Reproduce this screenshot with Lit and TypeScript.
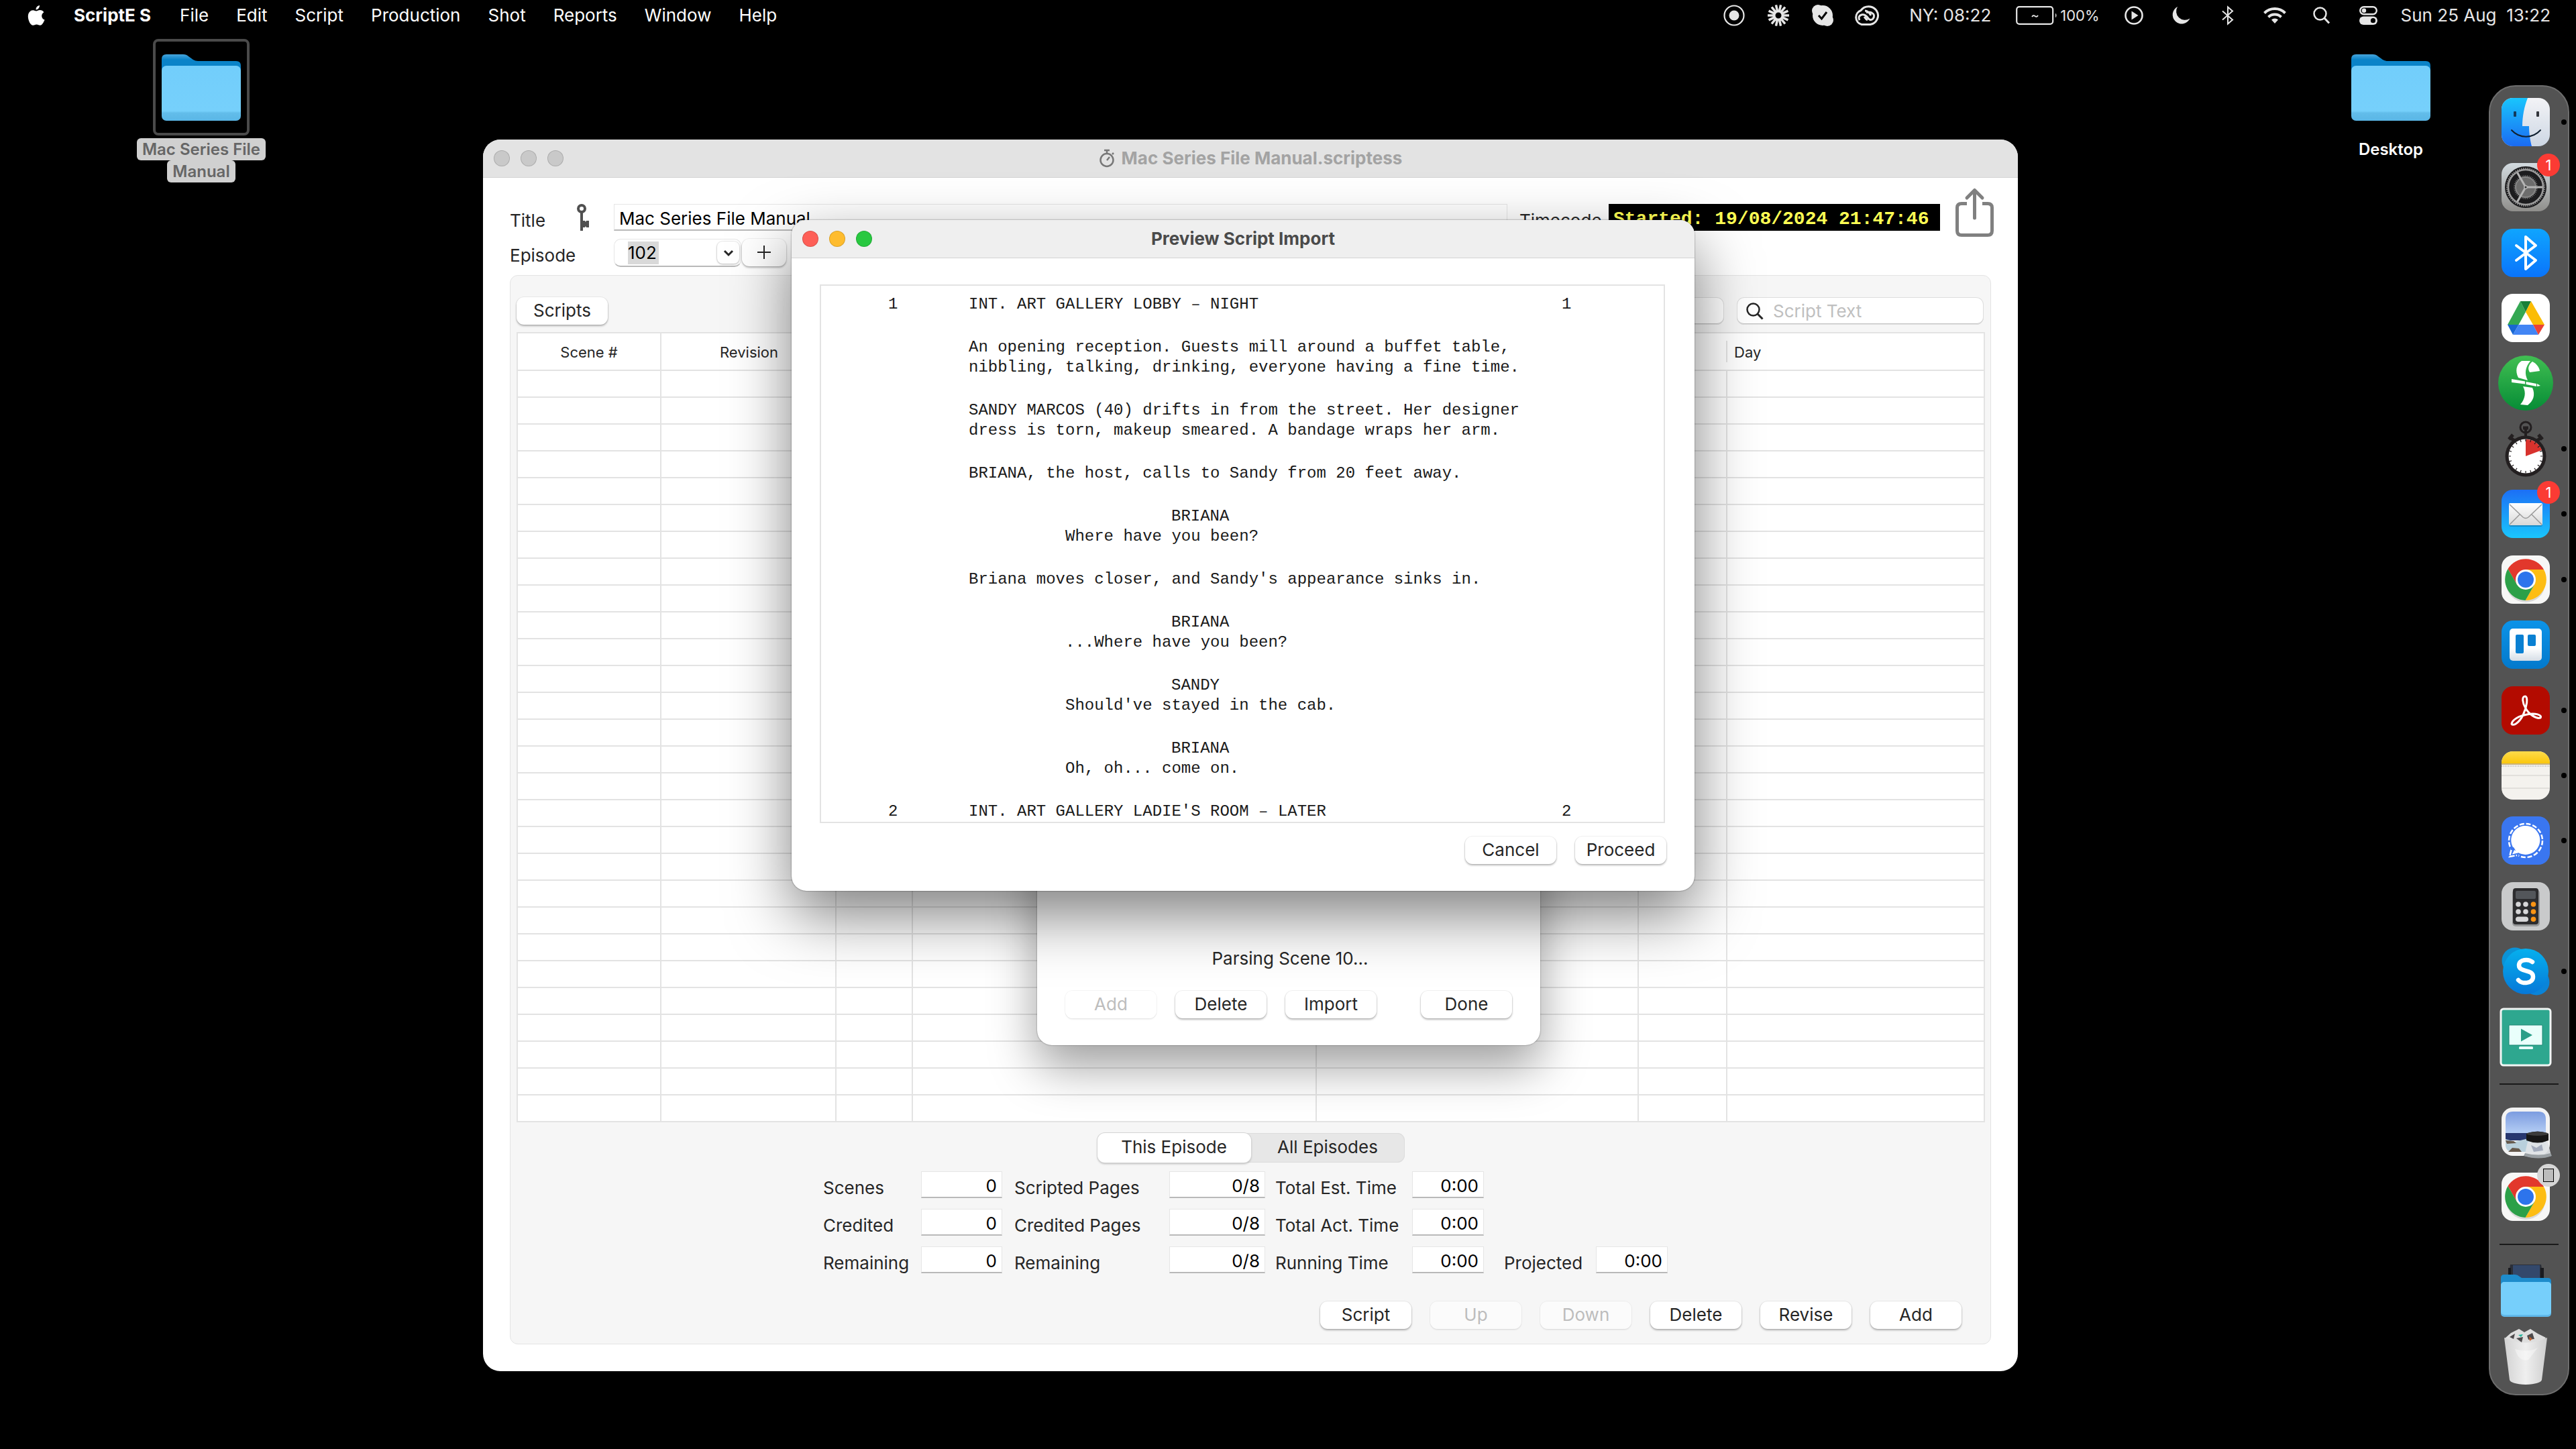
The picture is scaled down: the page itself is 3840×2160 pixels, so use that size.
import { LitElement, html, svg, css, nothing } from "lit";
import { customElement, property } from "lit/decorators.js";

const tile = (fill: string) => svg`<rect width="72" height="72" rx="17" fill=${fill} />`;

const chrome = svg`
  <rect width="72" height="72" rx="17" fill="#f7f7f6" />
  <ellipse cx="36" cy="42" rx="29" ry="28" fill="#000" opacity=".12" />
  <path d="M36 21H63A31 31 0 0 0 9.500 20.100L23 43.500 36 36z" fill="#e2382c" />
  <path d="M49 43.500L35.500 66.900A31 31 0 0 0 63 21H36v15z" fill="#fdbd14" />
  <path d="M23 43.500L9.500 20.100A31 31 0 0 0 35.500 66.900L49 43.500 36 36z" fill="#2ca048" />
  <circle cx="36" cy="36" r="15" fill="#fff" />
  <circle cx="36" cy="36" r="12" fill="#2d74ec" />`;

const spokes = (n: number, r1: number, r2: number) =>
  Array.from({ length: n }, (_, i) => {
    const a = (i * 2 * Math.PI) / n;
    const p = (r: number) => `${(Math.cos(a) * r).toFixed(2)} ${(Math.sin(a) * r).toFixed(2)}`;
    return `M${p(r1)}L${p(r2)}`;
  }).join("");

const dockArt: Record<string, unknown> = {
  finder: svg`
    <defs>
      <linearGradient id="a" x2="0" y2="1"><stop stop-color="#19c5fd" /><stop offset="1" stop-color="#1b6bf2" /></linearGradient>
      <linearGradient id="b" x2="0" y2="1"><stop stop-color="#f3f3f6" /><stop offset="1" stop-color="#cdd7e4" /></linearGradient>
      <clipPath id="c"><rect width="72" height="72" rx="17" /></clipPath>
    </defs>
    ${tile("url(#b)")}
    <path clip-path="url(#c)" d="M0 0H39C34 12 31 28 31 42H41C41 54 43 64 45 72H0z" fill="url(#a)" />
    <rect x="18" y="20" width="4" height="8" rx="1" fill="#123a5c" />
    <rect x="52" y="20" width="4" height="8" rx="1" fill="#33363c" />
    <path d="M15 48C27 61 46 61 58 48" fill="none" stroke="#10202f" stroke-width="2" stroke-linecap="round" />`,
  settings: svg`
    <defs><linearGradient id="a" x2="0" y2="1"><stop stop-color="#d3dbe0" /><stop offset="1" stop-color="#8f8e8b" /></linearGradient></defs>
    ${tile("url(#a)")}
    <circle cx="36" cy="36" r="31" fill="#1c1c1e" />
    <circle cx="36" cy="36" r="26" fill="none" stroke="#9b9b9b" stroke-width="2.500" />
    <path transform="translate(36 36)" d=${spokes(56, 25, 29)} stroke="#9b9b9b" stroke-width="1.300" />
    <circle cx="36" cy="36" r="15" fill="#6d6d6d" stroke="#888" stroke-width="2" />
    <path transform="translate(36 36)" d=${spokes(40, 15, 18)} stroke="#808080" stroke-width="1" />
    <path d="M36 36H61M36 36L23.500 14.300M36 36L23.500 57.700" stroke="#b5b5b5" stroke-width="3" />
    <circle cx="36" cy="36" r="3" fill="#b5b5b5" /><circle cx="36" cy="36" r="1.500" fill="#333" />`,
  bluetooth: svg`
    <defs><linearGradient id="a" x2="0" y2="1"><stop stop-color="#0fa5ff" /><stop offset="1" stop-color="#0a74fb" /></linearGradient></defs>
    ${tile("url(#a)")}
    <path d="M22 25L51 47 36 60V12L51 25 22 47" fill="none" stroke="#fff" stroke-width="4" stroke-linejoin="round" stroke-linecap="round" />`,
  drive: svg`
    ${tile("#fff")}
    <path d="M28 11L9 46H25.500L36 27z" fill="#34a853" /><path d="M28 11H44L36 27z" fill="#188038" />
    <path d="M44 11L64 46H47L36 27z" fill="#fbbc04" /><path d="M9 46H25.500L17 61z" fill="#1967d2" />
    <path d="M25.500 46H47L55 61H17z" fill="#4285f4" /><path d="M47 46H64L55 61z" fill="#ea4335" />`,
  draft: svg`
    <defs><linearGradient id="a" x2="0" y2="1"><stop stop-color="#41bf52" /><stop offset="1" stop-color="#068c36" /></linearGradient></defs>
    <circle cx="36" cy="36" r="41" fill="url(#a)" />
    <g fill="#fff">
      <path d="M30 3H43C35 13 34 22 39 32L25 28C20 18 22 8 30 3z" />
      <path d="M46 4C52 7 56 12 57 18L42 20C38 14 41 8 46 4z" />
      <path d="M15 30L35 33.500V37.500L15 35zM36.500 34L52 37V41L36.500 38zM53 37L58 40 53 41z" />
      <path d="M32 41L46 43C51 54 47 63 39 69L28 68C35 60 37 50 32 41z" />
    </g>`,
  stopwatch: svg`
    <g fill="none" stroke="#231f20"><circle cx="36" cy="4" r="8" stroke-width="3" />
    <path d="M36 5V20" stroke-width="4" /><path d="M32 5H40" stroke-width="5" />
    <path d="M12 19L21 25M60 19L51 25" stroke-width="5" /><path d="M11 22L17 15M61 22L55 15" stroke-width="5" /></g>
    <circle cx="36" cy="47" r="30.500" fill="#231f20" /><circle cx="36" cy="47" r="25.500" fill="#fff" />
    <path d="M36 47V22A25 25 0 0 1 60 38z" fill="#d8322d" />
    <path transform="translate(36 47)" d=${spokes(20, 22, 25.5)} stroke="#231f20" stroke-width="1.200" />`,
  mail: svg`
    <defs>
      <linearGradient id="a" x2="0" y2="1"><stop stop-color="#1c6ff5" /><stop offset="1" stop-color="#1ac6fd" /></linearGradient>
      <linearGradient id="b" x2="0" y2="1"><stop stop-color="#fff" /><stop offset="1" stop-color="#d8d8d8" /></linearGradient>
    </defs>
    ${tile("url(#a)")}
    <rect x="11" y="22" width="50" height="33" rx="3" opacity=".2" />
    <rect x="11" y="20" width="50" height="33" rx="2" fill="url(#b)" />
    <path d="M12 22L32 41Q36 44 40 41L60 22M12 52L27 37M60 52L45 37" fill="none" stroke="#9a9a9a" stroke-width="1.500" />`,
  chrome,
  trello: svg`
    <defs><linearGradient id="a" x2="0" y2="1"><stop stop-color="#0c93e8" /><stop offset="1" stop-color="#0379cc" /></linearGradient>
    <linearGradient id="b" x2="0" y2="1"><stop offset=".6" stop-color="#fff" /><stop offset="1" stop-color="#d5dde6" /></linearGradient></defs>
    ${tile("url(#a)")}
    <rect x="12" y="12" width="48" height="48" rx="5" fill="url(#b)" />
    <rect x="21" y="21" width="12" height="28" rx="2" fill="#0a80d2" /><rect x="39" y="21" width="12" height="17" rx="2" fill="#0a80d2" />`,
  acrobat: svg`
    ${tile("#b30b00")}
    <path d="M35 15C30 15 31 25 36 33C41 42 52 49 58 47C61 43 50 39 38 42C26 44 16 50 15 56C17 60 26 55 32 43C38 31 40 15 35 15z" fill="none" stroke="#fff" stroke-width="3" />`,
  notes: svg`
    <defs><clipPath id="c"><rect width="72" height="72" rx="17" /></clipPath>
    <linearGradient id="a" x2="0" y2="1"><stop stop-color="#fddb4b" /><stop offset="1" stop-color="#fbc70d" /></linearGradient></defs>
    <g clip-path="url(#c)"><rect width="72" height="72" fill="#f4f2ee" /><rect width="72" height="18" fill="url(#a)" />
    <path d="M0 19H72" stroke="#bd9d52" stroke-width="1.500" /><path d="M0 22H72" stroke="#bbb" stroke-width="2" stroke-dasharray="1 1.500" />
    <path d="M0 36H72M0 55H72" stroke="#cfcdc9" /></g>`,
  signal: svg`
    ${tile("#3a76f0")}
    <path d="M20 50L16 56 25 54A21.500 21.500 0 1 0 20 50z" fill="#fff" />
    <circle cx="36" cy="36" r="25" fill="none" stroke="#fff" stroke-width="2.500" stroke-dasharray="7 2.800" />
    <path d="M12 46L20 62 26 59 18 46z" fill="#3a76f0" /><path d="M19 50L16 56.500 26 54z" fill="#fff" />
    <path d="M14.500 50L12 60 23 58" fill="none" stroke="#fff" stroke-width="2.500" stroke-dasharray="8 2" />`,
  calculator: svg`
    ${tile("#c9cacb")}
    <rect x="16" y="11" width="41" height="55" rx="5" opacity=".25" /><rect x="17" y="9" width="38" height="54" rx="4" fill="#2c2c2e" />
    <rect x="21" y="13" width="30" height="12" rx="2" fill="#53565a" />
    <g fill="#d6d6d8"><circle cx="25" cy="33" r="3.800" /><circle cx="36" cy="33" r="3.800" /><circle cx="25" cy="44" r="3.800" /><circle cx="36" cy="44" r="3.800" /><rect x="21" y="51.500" width="19" height="7.600" rx="3.800" /></g>
    <g fill="#fb9414"><circle cx="47.500" cy="33" r="3.800" /><circle cx="47.500" cy="44" r="3.800" /><circle cx="47.500" cy="55.300" r="3.800" /></g>`,
  skype: svg`
    <defs><linearGradient id="a" x2="0" y2="1"><stop stop-color="#06b0ee" /><stop offset="1" stop-color="#0678d8" /></linearGradient></defs>
    <circle cx="20" cy="20" r="19.500" fill="#0b92d6" /><circle cx="52" cy="52" r="19.500" fill="#0a84d8" />
    <circle cx="36" cy="36" r="34" fill="url(#a)" />
    <path d="M46 22C40 17 26 18 26 27C26 38 47 32 47 44C47 55 30 55 25 49" fill="none" stroke="#fff" stroke-width="6.500" stroke-linecap="round" />`,
  screen: svg`
    <rect x="-1" y="-6" width="74" height="84" rx="4" fill="#2ea78f" stroke="#f1f5f4" stroke-width="3" />
    <rect x="11" y="18" width="50" height="30" rx="1" fill="#e9fffb" stroke="#1d8572" />
    <path d="M29 23.500L46 33 29 42.500z" fill="#2b9f88" /><rect x="26" y="50" width="21" height="4" rx="1.500" fill="#e9fffb" />`,
  preview: svg`
    <defs><linearGradient id="a" x2="0" y2="1"><stop stop-color="#7c9ce0" /><stop offset="1" stop-color="#b4cdf4" /></linearGradient></defs>
    ${tile("#f3f3f3")}
    <path d="M6 17Q6 6 17 6H55Q66 6 66 17V38H6z" fill="url(#a)" />
    <rect x="6" y="38" width="60" height="11" fill="#27376f" /><path d="M6 47L20 51 40 46 66 49V55Q66 66 55 66H17Q6 66 6 55z" fill="#b9d0dc" />
    <path d="M6 49L18 50 22 53 8 54zM10 66L16 60 26 61 30 66z" fill="#66594c" />
    <path d="M39 51H69L74 72Q56 78 34 72z" fill="#dfe3e6" opacity=".92" /><path d="M33 72Q56 79 75 72L73 68Q56 73 35 68z" fill="#9aa0a4" />
    <path d="M44 56L52 60 60 55 62 64 48 66z" fill="#7d87a0" opacity=".6" />
    <path d="M37 39Q54 32 70 39V49Q54 56 37 49z" fill="#161616" /><ellipse cx="53.500" cy="39" rx="16" ry="3" fill="#3b3b3b" />`,
  folder: svg`
    <path d="M10 18L13 -5H59L63 18z" fill="#2b2f38" /><path d="M17 16V-4H57V16z" fill="#33486b" /><path d="M10 0H14V16H10zM58 0H63V16H58z" fill="#1a1b1f" />
    <path d="M-1 15Q-1 10 4 10H20Q24 10 27 13L30 15H69Q74 15 74 20V32H-1z" fill="#1e8ccc" />
    <rect x="-1" y="21" width="75" height="52" rx="5" fill="#5fb8ea" /><rect x="-1" y="21" width="75" height="49" rx="5" fill="#76cffb" />`,
  trash: svg`
    <defs><linearGradient id="a"><stop stop-color="#d2d2d2" /><stop offset=".5" stop-color="#efefef" /><stop offset="1" stop-color="#cfcfcf" /></linearGradient></defs>
    <path d="M5 8L14 0 26 -6 34 -1 43 -6 54 1 66 7 60 16H12z" fill="#dedede" />
    <path d="M12 6L20 1 18 9zM38 4L46 0 49 9 40 10zM22 8L32 6 30 14z" fill="#4d4a4c" /><path d="M25 3L32 2 29 6z" fill="#23b79c" /><path d="M41 5L46 9 42 12z" fill="#c0612e" />
    <path d="M4 7Q36 22 68 7L60 70Q58 76 36 77Q14 76 12 70z" fill="url(#a)" /><path d="M20 24Q40 30 54 22L40 40Q26 44 20 24z" fill="#fff" opacity=".4" />`,
};

const menuIcons: Record<string, unknown> = {
  apple: svg`<path fill="#fff" d="M18 1c.2 3.500-2.600 6.700-5.400 6.500C12.200 4.200 15.300 1.200 18 1zM13 9.500c1.300 0 3-1.500 5.600-1.500 2.300 0 4.500 1.200 5.800 3.200-4.700 2.800-4 9.500 1.100 11.300-1 3-3.800 8.300-6.600 8.300-2 0-2.900-1.300-5.400-1.300s-3.400 1.300-5.300 1.300C4.500 30.800.8 23.500.8 17.500c0-5.900 3.700-9.300 7.300-9.300 2.200 0 3.800 1.300 4.900 1.300z"/>`,
  record: svg`<circle cx="16" cy="16" r="14.500" fill="none" stroke="#e6e6e6" stroke-width="2.200"/><circle cx="16" cy="16" r="7.500" fill="#e6e6e6"/>`,
  burst: svg`<g transform="translate(17 17)"><path d=${spokes(14, 6.5, 16)} stroke="#e6e6e6" stroke-width="3.500"/><circle r="6" fill="none" stroke="#e6e6e6" stroke-width="3"/></g>`,
  skype: svg`<g fill="#e6e6e6"><circle cx="9" cy="9" r="9"/><circle cx="23" cy="23" r="9"/><circle cx="16" cy="16" r="15"/></g><path d="M10 16l4.500 5L22 11" fill="none" stroke="#000" stroke-width="3"/>`,
  cloud: svg`<g fill="none" stroke="#e6e6e6" stroke-width="3"><path d="M12 28.500A11 11 0 0 1 11 7.500A14 13.500 0 1 1 25 28.500z"/><path d="M9 22q-3-6 3-8q5-1 9 4q4 6 8 2q4-6-2-9q-5-2-8 0M21 22q-2-1-5-5M17 8q5 0 9 7"/></g>`,
  battery: svg`<rect x="1.200" y="1.200" width="54" height="25.600" rx="4" fill="none" stroke="#e6e6e6" stroke-width="2.200"/><path d="M59 10.500q3 3.500 0 7z" fill="#e6e6e6"/><path d="M24 16q2-3 4.500-1t4.500-1" fill="none" stroke="#e6e6e6" stroke-width="1.800"/>`,
  play: svg`<circle cx="14" cy="14" r="12.500" fill="none" stroke="#e6e6e6" stroke-width="2.600"/><path d="M10.500 7.500L20.500 14l-10 6.500z" fill="#e6e6e6"/>`,
  moon: svg`<path d="M9 1A13.500 13.500 0 1 0 27.500 18.500A13 13 0 0 1 9 1z" fill="#e6e6e6"/>`,
  bluetooth: svg`<path d="M1 7.500L16 20.500 9 26.500V1.500L16 7.500 1 20.500" fill="none" stroke="#e6e6e6" stroke-width="2"/>`,
  wifi: svg`<g fill="none" stroke="#e6e6e6" stroke-width="4"><path d="M1.500 9.500a22 22 0 0 1 31 0"/><path d="M7.500 15.500a13.500 13.500 0 0 1 19 0"/></g><path d="M12 19.500a7 7 0 0 1 10 0L17 25z" fill="#e6e6e6"/>`,
  search: svg`<circle cx="10.500" cy="10.500" r="9" fill="none" stroke="#e6e6e6" stroke-width="2.500"/><path d="M17 17l7 7.500" stroke="#e6e6e6" stroke-width="3"/>`,
  control: svg`<rect x="1.200" y="1.200" width="24.600" height="11" rx="5.500" fill="none" stroke="#e6e6e6" stroke-width="2.400"/><circle cx="7" cy="6.700" r="3.200" fill="#e6e6e6"/><rect y="15.500" width="27" height="12.500" rx="6.200" fill="#e6e6e6"/><circle cx="20.500" cy="21.700" r="3.600" fill="#000"/>`,
};

@customElement("desktop-folder")
class DesktopFolder extends LitElement {
  @property() name = "";
  @property({ type: Boolean }) selected = false;
  static styles = css`
    :host { display: block; width: 200px; text-align: center; }
    .frame { display: grid; place-items: center; box-sizing: border-box; width: 144px; height: 144px; margin: 0 auto 4px; padding-top: 2px; border: 4px solid transparent; border-radius: 8px; }
    .on { border-color: #4a4a4a; }
    .name { font: 600 24px/33px Inter, sans-serif; color: #fff; }
    .on + .name span { background: #d0d0d0; color: #666; border-radius: 6px; padding: 2px 8px; -webkit-box-decoration-break: clone; box-decoration-break: clone; }
  `;
  render() {
    return html`
      <div class="frame ${this.selected ? "on" : ""}">
        <svg width="118" height="100" viewBox="0 0 118 100">
          <defs>
            <linearGradient id="back" x2="0" y2="1"><stop stop-color="#48a6dc" /><stop offset=".2" stop-color="#0a83c8" /></linearGradient>
            <linearGradient id="front" x2="0" y2="1"><stop stop-color="#72cefb" /><stop offset=".82" stop-color="#76d0fb" /><stop offset=".86" stop-color="#62bdea" /><stop offset="1" stop-color="#5ab6e6" /></linearGradient>
          </defs>
          <path d="M0 7Q0 0 7 0H32Q37 0 40 3L47 8Q50 10 54 10H111Q118 10 118 17V40H0z" fill="url(#back)" />
          <rect y="17" width="118" height="82" rx="7" fill="url(#front)" />
        </svg>
      </div>
      <div class="name"><span>${this.name}</span></div>`;
  }
}

@customElement("dock-item")
class DockItem extends LitElement {
  @property() icon = "";
  @property() label = "";
  @property() badge = "";
  @property({ type: Boolean }) running = false;
  static styles = css`
    :host { display: flex; align-items: center; position: relative; }
    button { all: unset; display: block; margin-left: 17px; height: 72px; }
    svg { display: block; overflow: visible; }
    .dot { position: absolute; right: 2px; width: 8px; height: 8px; border-radius: 50%; background: #000; }
    .badge { position: absolute; left: 70px; top: -1px; width: 34px; height: 34px; border-radius: 50%; background: #fb3b34; color: #fff; font: 22px/34px Inter, sans-serif; text-align: center; }
    .device { background: #d6d6d6; }
    .device::after { content: ""; display: block; width: 14px; height: 18px; margin: 7px 9px; border: 1px solid #000; background: #bcbcbc; }
  `;
  render() {
    return html`
      <button aria-label=${this.label}>
        <svg width="72" height="72" viewBox="0 0 72 72">${dockArt[this.icon]}</svg>
      </button>
      ${this.badge === "device" ? html`<span class="badge device"></span>` : this.badge ? html`<span class="badge">${this.badge}</span>` : nothing}
      ${this.running ? html`<span class="dot"></span>` : nothing}`;
  }
}

type Line = [kind: string, text: string];
const scriptBlocks: { scene?: string; lines: Line[] }[] = [
  { scene: "1", lines: [["action", "INT. ART GALLERY LOBBY – NIGHT"]] },
  { lines: [["action", "An opening reception. Guests mill around a buffet table,"], ["action", "nibbling, talking, drinking, everyone having a fine time."]] },
  { lines: [["action", "SANDY MARCOS (40) drifts in from the street. Her designer"], ["action", "dress is torn, makeup smeared. A bandage wraps her arm."]] },
  { lines: [["action", "BRIANA, the host, calls to Sandy from 20 feet away."]] },
  { lines: [["character", "BRIANA"], ["speech", "Where have you been?"]] },
  { lines: [["action", "Briana moves closer, and Sandy's appearance sinks in."]] },
  { lines: [["character", "BRIANA"], ["speech", "...Where have you been?"]] },
  { lines: [["character", "SANDY"], ["speech", "Should've stayed in the cab."]] },
  { lines: [["character", "BRIANA"], ["speech", "Oh, oh... come on."]] },
  { scene: "2", lines: [["action", "INT. ART GALLERY LADIE'S ROOM – LATER"]] },
];

const stats: [string, string][][] = [
  [["Scenes", "0"], ["Scripted Pages", "0/8"], ["Total Est. Time", "0:00"]],
  [["Credited", "0"], ["Credited Pages", "0/8"], ["Total Act. Time", "0:00"]],
  [["Remaining", "0"], ["Remaining", "0/8"], ["Running Time", "0:00"], ["Projected", "0:00"]],
];

const dock: { icon: string; label: string; badge?: string; running?: boolean }[][] = [
  [
    { icon: "finder", label: "Finder", running: true },
    { icon: "settings", label: "System Settings", badge: "1" },
    { icon: "bluetooth", label: "Bluetooth" },
    { icon: "drive", label: "Google Drive" },
    { icon: "draft", label: "Final Draft" },
    { icon: "stopwatch", label: "ScriptE", running: true },
    { icon: "mail", label: "Mail", badge: "1", running: true },
    { icon: "chrome", label: "Chrome", running: true },
    { icon: "trello", label: "Trello" },
    { icon: "acrobat", label: "Acrobat", running: true },
    { icon: "notes", label: "Notes", running: true },
    { icon: "signal", label: "Signal", running: true },
    { icon: "calculator", label: "Calculator" },
    { icon: "skype", label: "Skype", running: true },
    { icon: "screen", label: "Video player" },
  ],
  [
    { icon: "preview", label: "Preview" },
    { icon: "chrome", label: "Chrome on another device", badge: "device" },
  ],
  [
    { icon: "folder", label: "Downloads" },
    { icon: "trash", label: "Bin" },
  ],
];

@customElement("app-root")
class AppRoot extends LitElement {
  static styles = css`
    :host { display: block; font: 26px/32px Inter, sans-serif; color: #262626; }
    * { box-sizing: border-box; }
    button, input { font: inherit; color: inherit; margin: 0; }
    .desktop { position: relative; min-height: 100vh; background: #000; overflow: hidden; }
    .glyph { display: block; flex: none; overflow: visible; }

    .menubar { display: flex; align-items: center; height: 48px; padding: 0 38px 2px 41px; color: #fff; }
    .menubar button { all: unset; }
    .menus { display: flex; align-items: center; gap: 41px; }
    .menus .app { font-weight: 700; padding: 0 2px; }
    .status { display: flex; align-items: center; margin-left: auto; color: #e6e6e6; }
    .slot { display: grid; place-items: center; width: 70px; }
    .slot.wide { width: 66px; }
    .ny { margin: 0 37px 0 30px; }
    .power { display: flex; align-items: center; gap: 4px; margin-right: 16px; font-size: 22px; }
    .clock { margin-left: 13px; white-space: pre; }

    .left-folder, .right-folder { position: absolute; top: 58px; }
    .left-folder { left: 200px; }
    .right-folder { right: 176px; }

    .window { position: absolute; background: #fff; border-radius: 26px; }
    .titlebar { display: grid; grid-template-columns: 200px 1fr 200px; align-items: center; height: 57px; border-bottom: 1px solid #d2d2d2; border-radius: 26px 26px 0 0; }
    .titlebar h1 { display: flex; justify-content: center; align-items: center; gap: 10px; margin: 0; font-size: 26px; font-weight: 700; }
    .lights { display: flex; gap: 16px; padding-left: 16px; }
    .lights button { all: unset; width: 22px; height: 22px; border: 1px solid rgba(0, 0, 0, .14); border-radius: 50%; background: #c9c9c9; }
    .lights .close { background: #fe5f57; }
    .lights .min { background: #febc2e; }
    .lights .max { background: #28c840; }

    .btn { display: grid; place-items: center; width: 136px; height: 41px; padding: 0 0 2px; border: 0; border-radius: 11px; background: #fff; box-shadow: 0 0 0 1px rgba(0, 0, 0, .05), 0 2px 3px rgba(0, 0, 0, .28); }
    .btn:disabled { color: #bdbdbd; background: rgba(255, 255, 255, .5); box-shadow: 0 0 0 1px rgba(0, 0, 0, .04), 0 2px 2px rgba(0, 0, 0, .06); }
    .field { height: 40px; border: 1px solid #e6e6e6; border-bottom: 2px solid #b9b9b9; background: #fff; color: #000; padding: 4px 7px 0; min-width: 0; border-radius: 0; outline: 0; }

    .main { left: 720px; right: 832px; top: 208px; }
    .main .titlebar { background: #e3e3e3; color: #a3a3a3; }
    .top { display: flex; align-items: flex-start; gap: 23px; padding: 16px 36px 0 40px; }
    .fields { flex: 1; display: flex; flex-direction: column; gap: 11px; padding-top: 23px; }
    .line { display: flex; }
    .line label { padding-top: 9px; }
    .leadbox { display: flex; justify-content: space-between; width: 155px; flex: none; }
    .key { padding: 0; border: 0; background: none; width: 55px; height: 40px; text-align: left; }
    .title { flex: 1; }
    .tc { width: 133px; margin-left: 18px; flex: none; }
    .timecode { width: 494px; flex: none; background: #000; color: #ffff54; font: 700 28px/46px "Liberation Mono", monospace; height: 40px; padding-left: 7px; white-space: pre; overflow: hidden; }
    .combo { display: flex; align-items: center; width: 190px; height: 42px; padding: 0 2px 0 20px; border: 1px solid #e6e6e6; border-bottom: 2px solid #b9b9b9; border-radius: 10px; }
    .combo input { width: 46px; height: 34px; padding: 0; border: 0; background: #d9d9d9; color: #000; }
    .combo button { display: grid; place-items: center; width: 33px; height: 33px; margin-left: auto; padding: 0; border: 0; border-radius: 8px; background: #fff; box-shadow: 0 0 0 1px rgba(0, 0, 0, .06), 0 1px 3px rgba(0, 0, 0, .25); }
    .line .add { width: 66px; margin-left: 1px; }
    .share { all: unset; }

    .panel { margin: 12px 40px 40px; padding: 32px 8px 22px 9px; border: 1px solid #e4e4e4; border-radius: 12px; background: #f6f6f6; }
    .tools { display: flex; justify-content: space-between; align-items: center; margin-bottom: 11px; padding-right: 2px; }
    .searches { display: flex; gap: 19px; }
    .search { display: flex; align-items: center; gap: 14px; width: 368px; height: 41px; padding: 0 14px; border-radius: 11px; background: #fff; box-shadow: inset 0 0 0 1px #dedede, inset 0 -2px 0 #c4c4c4; }
    .search input { flex: 1; min-width: 0; padding: 0; border: 0; background: none; outline: 0; }
    .search input::placeholder { color: #bfbfbf; opacity: 1; }
    table { width: 100%; table-layout: fixed; border-spacing: 0; border: 2px solid #e3e3e3; border-bottom: 0; background: #fff; }
    th { height: 56px; padding: 2px 10px 0; border-bottom: 2px solid #e3e3e3; font-size: 22px; font-weight: 400; line-height: 28px; text-align: center; }
    th:first-child { border-right: 2px solid #e3e3e3; }
    th:nth-child(6) { background: linear-gradient(#e3e3e3, #e3e3e3) right center / 2px 32px no-repeat; }
    th:last-child { text-align: left; }
    td { height: 40px; padding: 0; border-bottom: 2px solid #e3e3e3; border-right: 2px solid #e3e3e3; }
    td:last-child { border-right: 0; }
    .c1 { width: 214px; } .c2 { width: 261px; } .c3 { width: 114px; } .c5 { width: 480px; } .c6 { width: 132px; } .c7 { width: 382px; }

    .segments { display: flex; width: 458px; height: 44px; margin: 16px auto 13px; border-radius: 11px; background: #e7e7e7; box-shadow: inset 0 0 0 1px #dcdcdc; }
    .segments button { flex: 1; border: 0; padding: 0 0 3px; background: none; border-radius: 11px; }
    .segments .on { background: #fff; box-shadow: 0 0 0 1px #d4d4d4, 0 2px 3px rgba(0, 0, 0, .25); }
    .stats { display: grid; grid-template-columns: 146px 121px 249px 143px 219px 107px 167px 107px; gap: 16px 0; justify-content: center; padding-right: 16px; }
    .stats label { padding-top: 9px; line-height: 31px; }
    .stats label:nth-of-type(3n + 2) { padding-left: 18px; }
    .stats label:nth-of-type(3n) { padding-left: 15px; }
    .stats label:nth-of-type(10) { padding-left: 30px; }
    .stats label:nth-of-type(3n + 1) { grid-column-start: 1; }
    .stats label:nth-of-type(10) { grid-column-start: 7; }
    .stats .field { text-align: right; }
    .actions { display: flex; justify-content: flex-end; gap: 28px; margin-top: 42px; padding-right: 35px; }

    .sheet { left: 1546px; right: 1544px; top: 900px; border-radius: 22px; padding: 513px 42px 40px; box-shadow: 0 0 2px rgba(0, 0, 0, .5), 0 32px 70px rgba(0, 0, 0, .38); }
    .sheet p { margin: 0 0 32px; text-align: center; padding-left: 4px; }
    .row { display: flex; gap: 28px; }
    .row .done { margin-left: auto; }

    .preview { left: 1180px; right: 1314px; top: 328px; border-radius: 22px; box-shadow: 0 0 2px rgba(0, 0, 0, .6), 0 36px 90px rgba(0, 0, 0, .5); }
    .preview .titlebar { background: #efefef; color: #4a4a4a; border-radius: 22px 22px 0 0; }
    .script { margin: 39px 44px 20px 42px; padding: 13px 0 0; height: 803px; border: 2px solid #e3e3e3; overflow: hidden; font: 24px/30px "Liberation Mono", monospace; color: #1a1a1a; }
    .block { display: grid; grid-template-columns: 120px 884px auto; padding-left: 100px; margin-bottom: 34px; }
    .block p { margin: 0; white-space: pre; }
    .block .speech { padding-left: 144px; }
    .block .character { padding-left: 302px; }
    .confirm { display: flex; justify-content: flex-end; gap: 28px; padding: 0 42px 40px 0; }

    .dock { position: absolute; right: 10px; top: 127px; bottom: 80px; width: 120px; display: flex; flex-direction: column; padding: 4px 0 6px; border: 2px solid #6d6d6d; border-radius: 40px; background: #535353; }
    .dock dock-item { flex: 1 1 0; min-height: 0; }
    .dock hr { flex: none; width: 88px; height: 2px; margin: 21px 0 21px 14px; border: 0; background: #1a1a1a; }
  `;

  private lights(active: boolean) {
    const names = ["close", "min", "max"];
    return html`<div class="lights">${names.map((n) => html`<button class=${active ? n : ""} aria-label=${n}></button>`)}</div>`;
  }

  private renderMenubar() {
    return html`
      <header class="menubar">
        <nav class="menus">
          <button aria-label="Apple menu"><svg width="26" height="32" class="glyph">${menuIcons.apple}</svg></button>
          <button class="app">ScriptE S</button>
          ${["File", "Edit", "Script", "Production", "Shot", "Reports", "Window", "Help"].map((m) => html`<button>${m}</button>`)}
        </nav>
        <div class="status">
          ${[["record", 32, 32], ["burst", 34, 34], ["skype", 32, 32], ["cloud", 40, 30]].map(
            ([n, w, h]) => html`<span class="slot wide"><svg class="glyph" width=${w} height=${h}>${menuIcons[n]}</svg></span>`)}
          <span class="ny">NY: 08:22</span>
          <span class="power"><svg class="glyph" width="62" height="28">${menuIcons.battery}</svg>100%</span>
          ${[["play", 28, 28], ["moon", 28, 28], ["bluetooth", 18, 28], ["wifi", 34, 26], ["search", 25, 26], ["control", 27, 28]].map(
            ([n, w, h]) => html`<span class="slot"><svg class="glyph" width=${w} height=${h}>${menuIcons[n]}</svg></span>`)}
          <span class="clock">Sun 25 Aug  13:22</span>
        </div>
      </header>`;
  }

  private renderMain() {
    return html`
      <section class="window main">
        <div class="titlebar">
          ${this.lights(false)}
          <h1>
            <svg width="24" height="28" viewBox="0 0 24 28"><g fill="none" stroke="#777" stroke-width="2.500"><circle cx="12" cy="16.500" r="9.500" /><path d="M12 7V3M8 2h8M20 8l2-2M12 17l4-5" /></g></svg>
            Mac Series File Manual.scriptess
          </h1>
        </div>
        <div class="top">
          <div class="fields">
            <div class="line">
              <span class="leadbox">
                <label for="title">Title</label>
                <button class="key" aria-label="Lock title">
                  <svg width="18" height="40" viewBox="0 0 18 40"><circle cx="7" cy="7" r="5" fill="none" stroke="#505050" stroke-width="4" /><path d="M5 12h4v13h3l1 2 1-2h4v10h-4l-1-2-1 2H9v5H5z" fill="#505050" /></svg>
                </button>
              </span>
              <input id="title" class="field title" value="Mac Series File Manual" />
              <label class="tc" for="timecode">Timecode</label>
              <output id="timecode" class="timecode">Started: 19/08/2024 21:47:46</output>
            </div>
            <div class="line">
              <span class="leadbox"><label for="episode">Episode</label></span>
              <span class="combo">
                <input id="episode" value="102" />
                <button aria-label="Choose episode"><svg width="16" height="12" viewBox="0 0 16 12"><path d="M2 3l6 6 6-6" fill="none" stroke="#262626" stroke-width="3" /></svg></button>
              </span>
              <button class="btn add" aria-label="Add episode"><svg width="22" height="22" viewBox="0 0 22 22"><path d="M11 1v20M1 11h20" stroke="#262626" stroke-width="2" /></svg></button>
            </div>
          </div>
          <button class="share" aria-label="Share">
            <svg class="glyph" width="57" height="72" viewBox="0 0 57 72"><g fill="none" stroke="#808080" stroke-width="5" stroke-linecap="round" stroke-linejoin="round"><path d="M17 22.500H9q-6.500 0-6.500 6V63q0 6.500 6.500 6.500h39q6.500 0 6.500-6.500V28.500q0-6-6.500-6H40" stroke-linecap="butt" /><path d="M28.500 44V3M17 14L28.500 2.500 40 14" /></g></svg>
          </button>
        </div>
        <div class="panel">
          <div class="tools">
            <button class="btn">Scripts</button>
            <div class="searches">
              <span class="search"><input aria-label="Filter" /></span>
              <span class="search">
                <svg width="26" height="26" viewBox="0 0 26 26"><circle cx="10.500" cy="10.500" r="9" fill="none" stroke="#262626" stroke-width="2.500" /><path d="M17 17l7.500 7.500" stroke="#262626" stroke-width="3" /></svg>
                <input aria-label="Script Text" placeholder="Script Text" />
              </span>
            </div>
          </div>
          <table>
            <colgroup><col class="c1" /><col class="c2" /><col class="c3" /><col /><col class="c5" /><col class="c6" /><col class="c7" /></colgroup>
            <thead><tr><th>Scene #</th><th>Revision</th><th></th><th></th><th></th><th></th><th>Day</th></tr></thead>
            <tbody>
              ${Array.from({ length: 28 }, () => html`<tr>${Array.from({ length: 7 }, () => html`<td></td>`)}</tr>`)}
            </tbody>
          </table>
          <div class="segments"><button class="on">This Episode</button><button>All Episodes</button></div>
          <div class="stats">
            ${stats.map((row, r) => row.map(([label, value], c) => html`<label for="s${r}${c}">${label}</label><input id="s${r}${c}" class="field" readonly value=${value} />`))}
          </div>
          <div class="actions">
            <button class="btn">Script</button><button class="btn" disabled>Up</button><button class="btn" disabled>Down</button>
            <button class="btn">Delete</button><button class="btn">Revise</button><button class="btn">Add</button>
          </div>
        </div>
      </section>`;
  }

  private renderPreview() {
    return html`
      <section class="window preview">
        <div class="titlebar">${this.lights(true)}<h1>Preview Script Import</h1></div>
        <div class="script">
          ${scriptBlocks.map((b) => html`
            <div class="block">
              <span>${b.scene ?? ""}</span>
              <div>${b.lines.map(([kind, text]) => html`<p class=${kind}>${text}</p>`)}</div>
              <span>${b.scene ?? ""}</span>
            </div>`)}
        </div>
        <div class="confirm"><button class="btn">Cancel</button><button class="btn">Proceed</button></div>
      </section>`;
  }

  render() {
    return html`
      <main class="desktop">
        ${this.renderMenubar()}
        <desktop-folder class="left-folder" name="Mac Series File Manual" selected></desktop-folder>
        <desktop-folder class="right-folder" name="Desktop"></desktop-folder>
        ${this.renderMain()}
        <section class="window sheet">
          <p>Parsing Scene 10...</p>
          <div class="row">
            <button class="btn" disabled>Add</button><button class="btn">Delete</button><button class="btn">Import</button><button class="btn done">Done</button>
          </div>
        </section>
        ${this.renderPreview()}
        <aside class="dock">
          ${dock.map((group, i) => html`${i ? html`<hr />` : nothing}${group.map((d) => html`
            <dock-item icon=${d.icon} label=${d.label} badge=${d.badge ?? ""} ?running=${d.running}></dock-item>`)}`)}
        </aside>
      </main>`;
  }
}
